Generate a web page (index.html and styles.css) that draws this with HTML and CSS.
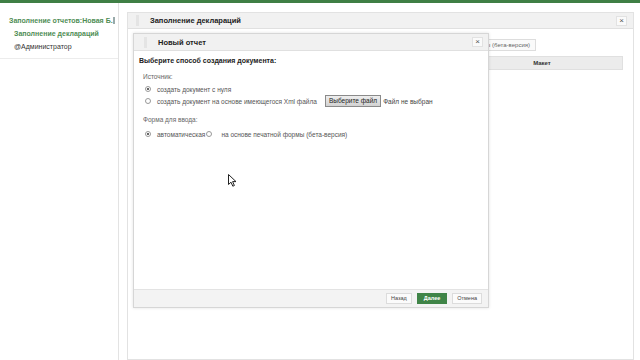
FILE: index.html
```html
<!DOCTYPE HTML>
<html lang="ru">
<head>
    <meta charset="UTF-8">
    <title>Заполнение деклараций</title>
    <link rel="stylesheet" href="styles.css">
</head>
<body>
<div class="topBar"></div>
<div class="app">
    <div class="side">
        <div class="sideMenu">
            <div class="sideTitle">
                <span>Заполнение отчетов:Новая Б.</span>
                <span class="sideIco"></span>
            </div>
            <div class="sideItem">Заполнение деклараций</div>
            <div class="sideUser">@Администратор</div>
        </div>
    </div>
    <div class="main">
        <div class="panel">
            <div class="panelHead">
                <span class="grip"></span>
                <span class="panelTitle">Заполнение деклараций</span>
                <span class="closeBtn">×</span>
            </div>
            <div class="panelBody">
                <div class="toolbar">
                    <span class="tbBtn">формы (бета-версия)</span>
                </div>
                <div class="grid">
                    <div class="gridCol">Наименование</div>
                    <div class="gridCol gridLast">Макет</div>
                </div>
            </div>
        </div>

        <!-- модальное окно -->
        <div class="dialog">
            <div class="dlgHead">
                <span class="grip"></span>
                <span class="dlgTitle">Новый отчет</span>
                <span class="closeBtn">×</span>
            </div>
            <div class="dlgBody">
                <div class="dlgQuestion">Выберите способ создания документа:</div>
                <div class="group">
                    <div class="groupLabel">Источник:</div>
                    <div class="row">
                        <span class="radio on"></span>
                        <span>создать документ с нуля</span>
                    </div>
                    <div class="row">
                        <span class="radio"></span>
                        <span>создать документ на основе имеющегося Xml файла</span>
                        <span class="fileBtn">Выберите файл</span>
                        <span class="fileName">Файл не выбран</span>
                    </div>
                </div>
                <div class="group group2">
                    <div class="groupLabel">Форма для ввода:</div>
                    <div class="row">
                        <span class="radio on"></span>
                        <span>автоматическая</span>
                        <span class="radio radioTight"></span>
                        <span>на основе печатной формы (бета-версия)</span>
                    </div>
                </div>
            </div>
            <div class="dlgFoot">
                <span class="btn">Назад</span>
                <span class="btn btnGreen">Далее</span>
                <span class="btn">Отмена</span>
            </div>
        </div>

        <svg class="cursor" width="9" height="13" viewBox="0 0 9 13">
            <path d="M0.5 0.5 L0.5 10.5 L3 8.2 L4.8 12.2 L6.4 11.5 L4.6 7.6 L8 7.6 Z" fill="#fff" stroke="#222" stroke-width="1"/>
        </svg>
    </div>
</div>
</body>
</html>
```

FILE: styles.css
```css
body{
    margin:0;
    padding:0;
    font-family:"Liberation Sans",Arial,sans-serif;
    font-size:6.5px;
    color:#333;
    background:#fff;
    width:640px;
    height:360px;
    overflow:hidden;
}
.topBar{
    height:3px;
    background:#3f7f45;
}
.app{
    display:flex;
    height:357px;
}
.side{
    width:118px;
    border-right:1px solid #e3e3e3;
}
.sideMenu{
    padding:11px 0 5px 0;
    border-bottom:1px solid #ececec;
}
.sideTitle{
    display:flex;
    align-items:center;
    justify-content:space-between;
    padding:0 3px 0 9px;
    height:12px;
    color:#4f8d55;
    font-weight:bold;
    font-size:7px;
    white-space:nowrap;
}
.sideIco{
    width:5px;
    height:5px;
    border:1px solid #9aa;
    background:#f4f4f4;
}
.sideItem{
    padding:2px 0 0 14px;
    height:12px;
    line-height:12px;
    color:#4f8d55;
    font-weight:bold;
    font-size:7px;
}
.sideUser{
    padding-left:14px;
    height:13px;
    line-height:13px;
    color:#333;
    font-size:7px;
}
.main{
    flex:1;
    position:relative;
    padding:9px 6px 0 8px;
}
.panel{
    border:1px solid #e2e2e2;
    height:100%;
    box-sizing:border-box;
}
.panelHead,.dlgHead{
    display:flex;
    align-items:center;
    height:15px;
    background:#f1f1f1;
    border-bottom:1px solid #e0e0e0;
    padding:0 6px 0 8px;
}
.grip{
    width:3px;
    height:11px;
    background:#e4e4e4;
    margin-right:11px;
}
.panelTitle,.dlgTitle{
    flex:1;
    font-weight:bold;
    font-size:7.5px;
    color:#222;
}
.closeBtn{
    width:9px;
    height:8px;
    line-height:8px;
    text-align:center;
    font-size:8px;
    color:#555;
    border:1px solid #e2e2e2;
    background:#fafafa;
}
.panelBody{
    padding:10px 10px 0 5px;
}
.toolbar{
    display:flex;
    justify-content:flex-end;
    padding-right:87px;
    height:12px;
}
.tbBtn{
    border:1px solid #ddd;
    background:#fafafa;
    padding:0 5px;
    height:10px;
    line-height:10px;
    font-size:6px;
    color:#666;
}
.grid{
    display:flex;
    margin-top:5px;
    height:12px;
    line-height:12px;
    background:#ececec;
    border:1px solid #e0e0e0;
    font-weight:bold;
    font-size:6px;
    color:#333;
}
.gridCol{
    flex:1;
    text-align:center;
    border-right:1px solid #ddd;
}
.gridLast{
    flex:0 0 160px;
    border-right:none;
}
.dialog{
    position:absolute;
    left:14px;
    top:30px;
    width:354px;
    height:273px;
    border:1px solid #d6d6d6;
    background:#fff;
    display:flex;
    flex-direction:column;
    box-shadow:0 0 3px rgba(0,0,0,.12);
}
.dlgHead{
    height:16px;
    padding:0 5px 0 10px;
}
.dlgBody{
    flex:1;
    padding:3px 5px;
}
.dlgQuestion{
    font-weight:bold;
    font-size:7px;
    color:#222;
    height:13px;
    line-height:13px;
}
.group{
    padding:4px 0 0 4px;
}
.group2{
    padding-top:7px;
}
.groupLabel{
    color:#666;
    height:12px;
    line-height:12px;
}
.group2 .groupLabel{
    margin-bottom:2px;
}
.row{
    display:flex;
    align-items:center;
    height:12px;
    color:#555;
    white-space:nowrap;
}
.radio{
    width:4px;
    height:4px;
    border:1px solid #999;
    border-radius:50%;
    margin:0 6px 0 2px;
    background:#fff;
    position:relative;
}
.radio.on::after{
    content:"";
    position:absolute;
    left:1px;
    top:1px;
    width:2px;
    height:2px;
    border-radius:50%;
    background:#333;
}
.radioTight{
    margin:0 9px 0 1px;
}
.fileBtn{
    margin-left:8px;
    height:10px;
    line-height:10px;
    padding:0 3px;
    border:1px solid #8a8a8a;
    background:linear-gradient(#eee,#d2d2d2);
    color:#222;
}
.fileName{
    margin-left:2px;
    color:#444;
}
.dlgFoot{
    display:flex;
    justify-content:flex-end;
    align-items:center;
    gap:5px;
    height:16px;
    background:#f3f3f3;
    border-top:1px solid #e3e3e3;
    padding:0 6px 1px 0;
}
.btn{
    height:9px;
    line-height:9px;
    padding:0 4px;
    border:1px solid #dcdcdc;
    background:#fbfbfb;
    color:#444;
    font-size:5.5px;
}
.btnGreen{
    padding:0 6px;
    background:#3f8447;
    border-color:#3f8447;
    color:#fff;
    font-weight:bold;
}
.cursor{
    position:absolute;
    left:109px;
    top:171px;
}
```
